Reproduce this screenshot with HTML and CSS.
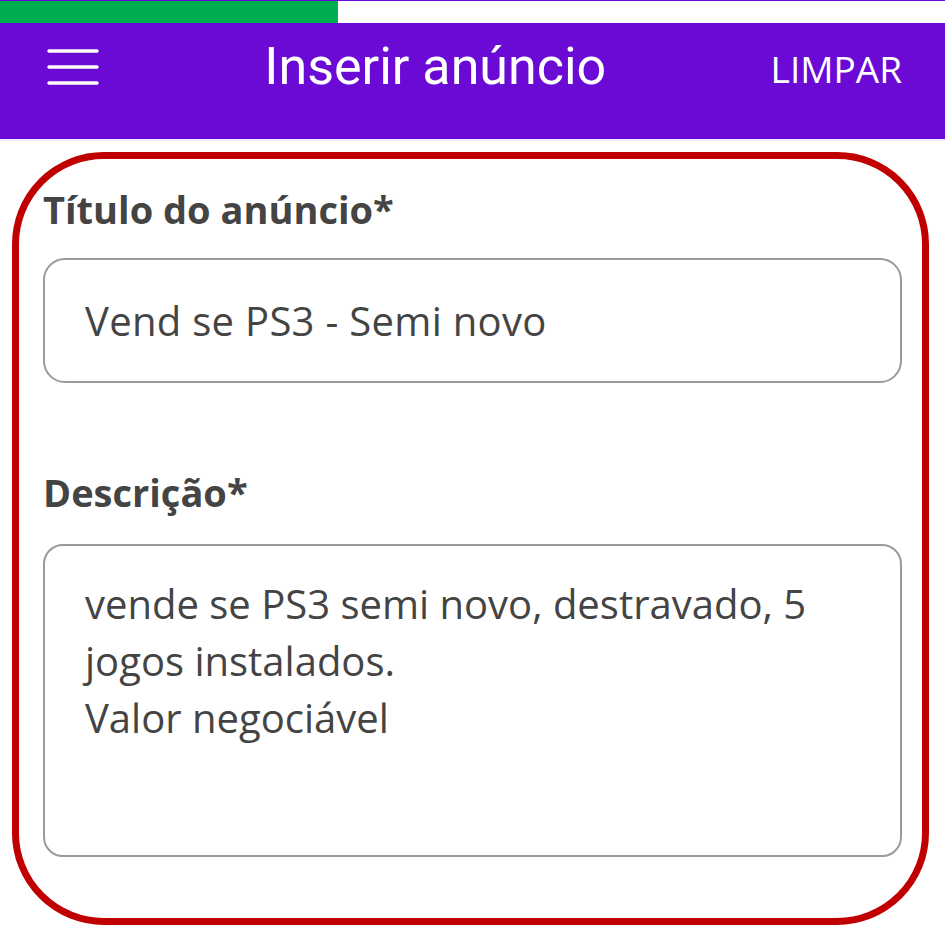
FILE: index.html
```html
<!DOCTYPE html>
<html lang="pt">
<head>
<meta charset="utf-8">
<title>Inserir anúncio</title>
<link rel="stylesheet" href="styles.css">
</head>
<body>
<div class="progress"><div class="progress-fill" style="width:338px"></div></div>
<header class="appbar">
  <button class="menu" aria-label="menu">
    <svg width="52" height="36" viewBox="0 0 52 36"><g stroke="#fff" stroke-width="3.4" stroke-linecap="round"><line x1="2" y1="2" x2="50" y2="2"/><line x1="2" y1="18" x2="50" y2="18"/><line x1="2" y1="34" x2="50" y2="34"/></g></svg>
  </button>
  <h1 class="title">Inserir anúncio</h1>
  <span class="action">LIMPAR</span>
</header>
<div class="divider"></div>
<main class="form">
  <div class="field">
    <label class="label">Título do anúncio*</label>
    <div class="input">Vend se PS3 - Semi novo</div>
  </div>
  <div class="field field-desc">
    <label class="label">Descrição*</label>
    <div class="textarea">vende se PS3 semi novo, destravado, 5<br>jogos instalados.<br>Valor negociável</div>
  </div>
  <div class="highlight"></div>
</main>
</body>
</html>
```
FILE: styles.css
```css
html, body { margin: 0; padding: 0; background: #fff; }
body { font-family: "Open Sans", "Liberation Sans", sans-serif; color: #444; width: 945px; height: 945px; overflow: hidden; }

.progress { height: 22px; border-top: 1px solid #6a0ad4; background: #fff; }
.progress-fill { height: 100%; background: #00ae50; }

.appbar { height: 116px; background: #6a0ad4; display: flex; align-items: center; padding: 0 43px 28px 46px; box-sizing: border-box; }
.menu { background: none; border: 0; padding: 0; margin: 0; width: 54px; height: 38px; display: flex; align-items: center; justify-content: center; }
.title { flex: 1; margin: 0; text-align: center; font-family: Roboto, sans-serif; font-weight: 400; font-size: 52px; line-height: 60px; color: #fff; }
.action { font-family: "Open Sans", sans-serif; font-size: 37px; line-height: 44px; color: #fff; margin-top: 4px; }
.divider { height: 2px; background: #f1eefb; }

.form { position: relative; padding: 46px 43px 0 43px; }
.field { display: flex; flex-direction: column; }
.field-desc { margin-top: 87px; }
.label { font-size: 38px; font-weight: 700; color: #444; line-height: 44px; }
.input { margin-top: 27px; height: 125px; box-sizing: border-box; border: 2px solid #9a9a9a; border-radius: 22px; padding: 0 40px; display: flex; align-items: center; font-size: 40px; letter-spacing: 0.3px; color: #444; }
.textarea { margin-top: 30px; height: 313px; box-sizing: border-box; border: 2px solid #9a9a9a; border-radius: 20px; padding: 29px 40px 0 40px; font-size: 40px; line-height: 57px; color: #444; }

.highlight { position: absolute; left: 12px; top: 11px; width: 917px; height: 773px; box-sizing: border-box; border: 7px solid #c00000; border-radius: 92px; pointer-events: none; }
```
